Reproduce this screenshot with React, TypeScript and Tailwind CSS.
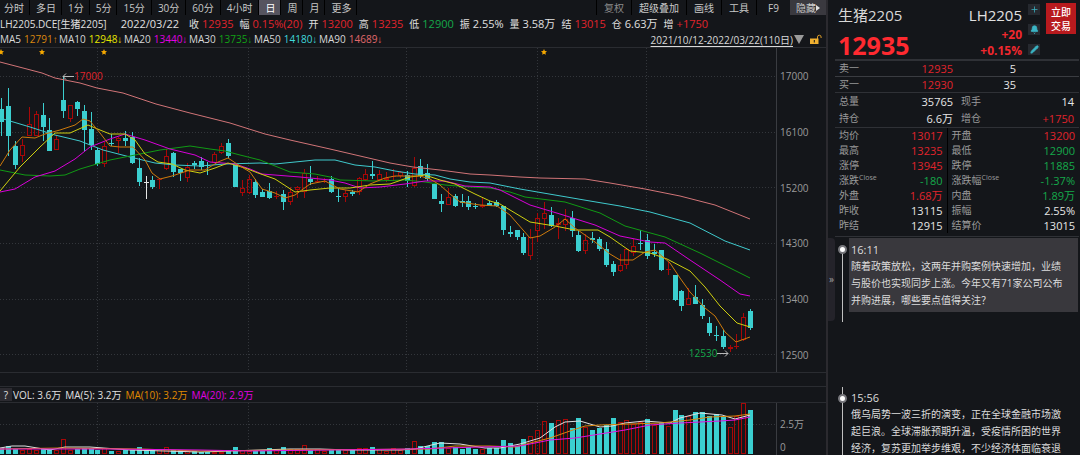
import { Bell, Pencil, Plus } from 'lucide-react';
import clsx from 'clsx';

type Candle = [kind: string, high: number, top: number, bottom: number, low: number, volume: number];

// kind: d = down, u = up, w = flat
const CANDLES: Candle[] = [
  ['d', 98, 109, 122, 136, 448], ['d', 88, 106, 136, 156, 446], ['d', 141, 146, 165, 169, 449], ['u', 139, 145, 156, 162, 450],
  ['u', 107, 124, 136, 136, 449], ['u', 111, 114, 136, 136, 450], ['d', 103, 115, 127, 141, 449], ['d', 118, 130, 151, 151, 449],
  ['u', 135, 139, 150, 150, 450], ['d', 76, 100, 111, 118, 439], ['u', 105, 105, 119, 122, 450], ['d', 101, 102, 109, 116, 449],
  ['d', 105, 111, 130, 151, 448], ['d', 112, 129, 145, 150, 448], ['d', 148, 150, 164, 166, 450], ['u', 142, 146, 164, 167, 448],
  ['d', 134, 143, 144, 146, 451], ['u', 137, 138, 141, 153, 451], ['d', 131, 138, 141, 146, 450], ['d', 132, 137, 163, 164, 450],
  ['d', 158, 168, 182, 186, 447], ['w', 176, 182, 183, 199, 450], ['d', 176, 180, 187, 189, 450], ['u', 178, 179, 180, 189, 449],
  ['u', 149, 156, 169, 170, 447], ['d', 152, 153, 172, 177, 450], ['d', 169, 169, 173, 181, 450], ['u', 163, 167, 178, 182, 451],
  ['d', 161, 163, 165, 169, 451], ['d', 157, 161, 167, 170, 452], ['d', 162, 165, 166, 175, 452], ['u', 152, 154, 163, 163, 452],
  ['u', 143, 146, 153, 154, 452], ['d', 139, 143, 156, 158, 451], ['d', 165, 165, 187, 187, 447], ['u', 180, 188, 193, 196, 450],
  ['u', 175, 179, 193, 194, 451], ['d', 179, 182, 195, 198, 450], ['d', 189, 192, 197, 197, 450], ['d', 183, 191, 198, 199, 448],
  ['u', 191, 196, 197, 199, 450], ['d', 190, 194, 202, 210, 447], ['u', 187, 192, 202, 205, 449], ['u', 186, 187, 190, 198, 449],
  ['u', 169, 173, 192, 198, 445], ['d', 166, 179, 182, 185, 450], ['u', 176, 181, 182, 183, 449], ['u', 178, 181, 182, 183, 451],
  ['d', 176, 179, 192, 193, 450], ['d', 188, 196, 197, 202, 450], ['u', 190, 193, 197, 202, 450], ['d', 190, 192, 194, 196, 450],
  ['u', 177, 178, 192, 195, 448], ['u', 169, 174, 180, 181, 448], ['d', 161, 174, 176, 179, 447], ['u', 170, 174, 180, 181, 449],
  ['u', 172, 178, 180, 182, 451], ['u', 169, 176, 177, 181, 448], ['u', 171, 172, 176, 178, 450], ['d', 171, 175, 181, 187, 448],
  ['u', 157, 168, 186, 187, 441], ['d', 159, 166, 176, 178, 446], ['d', 164, 173, 179, 181, 446], ['d', 184, 184, 199, 199, 442],
  ['d', 194, 201, 204, 212, 442], ['u', 188, 197, 205, 205, 448], ['d', 194, 196, 206, 207, 447], ['d', 194, 201, 203, 207, 449],
  ['d', 196, 201, 207, 210, 447], ['d', 203, 206, 207, 209, 449], ['u', 197, 205, 207, 208, 449], ['d', 201, 203, 206, 206, 448],
  ['d', 200, 202, 206, 207, 448], ['d', 206, 206, 230, 235, 440], ['d', 226, 232, 234, 237, 443], ['d', 230, 230, 237, 240, 446],
  ['d', 233, 237, 253, 255, 439], ['u', 229, 237, 256, 260, 436], ['u', 213, 218, 231, 242, 430], ['u', 202, 213, 219, 229, 421],
  ['d', 207, 215, 226, 227, 423], ['u', 218, 223, 225, 239, 420], ['u', 209, 219, 225, 231, 419], ['d', 211, 218, 231, 237, 428],
  ['d', 230, 235, 251, 252, 418], ['u', 234, 240, 251, 254, 427], ['d', 232, 238, 240, 243, 430], ['d', 237, 239, 249, 251, 428],
  ['d', 242, 249, 265, 267, 425], ['d', 261, 264, 272, 276, 418], ['u', 254, 265, 271, 272, 422], ['u', 248, 249, 265, 269, 420],
  ['u', 239, 246, 253, 256, 424], ['d', 230, 243, 244, 250, 422], ['d', 234, 240, 256, 259, 419], ['d', 244, 252, 254, 257, 425],
  ['d', 250, 250, 270, 271, 423], ['u', 262, 269, 270, 275, 426], ['d', 275, 275, 300, 301, 410], ['d', 290, 291, 306, 311, 415],
  ['u', 288, 298, 305, 305, 416], ['d', 285, 297, 304, 304, 412], ['d', 299, 305, 316, 319, 412], ['d', 317, 323, 333, 336, 416],
  ['d', 326, 335, 336, 341, 414], ['d', 330, 336, 347, 349, 416], ['u', 345, 347, 349, 352, 427], ['u', 334, 346, 347, 349, 416],
  ['u', 313, 317, 340, 341, 403], ['d', 309, 311, 328, 330, 410],
];

// volume bars drawn hollow although the candle closed down
const UP_VOLUME = [3, 9, 93, 95];

const PRICE_LINES = [
  { color: '#d17477', points: '0,62 23,68 42,73 55,78 80,83 97,88 123,93 156,104 190,113 230,123 265,134 290,140 330,149 360,156 390,163 413,167 440,170 470,174 490,175 520,177 540,178 585,179 610,183 645,189 680,196 715,205 750,219' },
  { color: '#3fc9cc', points: '0,118 30,127 55,135 80,141 103,150 130,157 155,163 175,165 200,166 225,164 260,163 275,164 295,162 315,160 335,160 355,165 375,167 395,171 415,174 435,175 450,179 470,182 490,183 520,189 555,195 590,201 620,206 650,212 690,223 725,241 750,250' },
  { color: '#109a14', points: '0,170 25,175 50,176 65,175 80,169 110,160 135,155 160,150 190,146 210,149 225,151 240,155 260,160 275,166 290,172 315,174 330,177 340,180 375,181 405,180 425,182 445,185 470,187 490,188 510,192 525,197 565,202 600,213 625,226 665,237 700,253 750,278' },
  { color: '#d800d8', points: '0,192 15,189 35,177 55,171 75,159 90,147 110,139 125,134 145,140 170,149 195,155 210,162 235,164 250,169 262,174 300,177 330,180 345,183 360,188 380,187 405,184 425,181 445,181 465,186 490,187 500,190 530,205 560,214 595,225 620,236 650,242 665,243 690,260 720,280 740,294 750,296' },
  { color: '#cfcf10', points: '0,191 20,167 40,147 55,133 70,133 88,125 100,130 110,134 125,134 135,140 145,154 158,162 172,164 185,170 200,173 215,168 228,163 245,168 258,173 275,179 295,192 310,190 330,188 350,188 370,185 390,184 410,177 425,175 440,180 455,184 475,194 490,201 500,204 530,222 555,226 575,230 598,230 610,237 630,251 650,253 667,259 690,271 705,287 720,306 737,323 750,327' },
  { color: '#cd7a0c', points: '0,166 10,150 22,137 35,138 45,134 60,130 75,125 83,119 90,121 100,133 110,146 120,147 133,147 145,160 152,173 160,179 172,176 190,170 205,170 218,162 228,158 240,166 250,172 262,189 275,193 285,198 295,195 310,184 325,181 340,189 358,192 370,184 385,178 395,176 420,176 430,179 440,185 450,194 460,202 480,205 497,206 510,215 530,238 540,236 555,227 565,219 575,228 595,242 610,254 620,260 633,260 645,252 655,250 670,263 680,278 690,292 705,308 715,316 725,332 736,342 750,337' },
];

const VOLUME_LINES = [
  { color: '#e0e0e0', points: '0,448 12,446 25,446 50,450 65,447 90,447 130,450 200,452 260,450 290,449 320,449 350,450 400,450 415,449 440,443 460,444 485,448 500,448 520,444 540,438 555,427 565,422 580,421 590,424 600,427 612,426 625,423 645,421 670,423 680,418 700,413 722,415 735,419 750,415' },
  { color: '#d9860f', points: '0,449 60,448 140,449 200,451 290,450 430,449 455,446 490,446 515,447 530,443 550,438 570,431 585,426 600,425 660,423 690,420 710,417 735,416 750,414' },
  { color: '#e012e0', points: '0,449 110,449 200,450 250,451 330,450 410,449 480,447 520,446 550,440 575,438 600,434 625,430 650,425 680,423 720,421 735,420 750,417' },
];

const GRID_X = [97, 248, 406, 537, 646];
const GRID_Y = [76, 132, 187, 243, 299, 354];
const STARS = [1, 42, 104, 544];

const PERIODS = ['分时', '多日', '1分', '5分', '15分', '30分', '60分', '4小时', '日', '周', '月', '更多'];
const TOOLS = ['复权', '超级叠加', '画线', '工具', 'F9'];

const SUMMARY = [
  ['收', '12935', 'text-[#e0242c]'],
  ['幅', '0.15%(20)', 'text-[#e0242c]'],
  ['开', '13200', 'text-[#e0242c]'],
  ['高', '13235', 'text-[#e0242c]'],
  ['低', '12900', 'text-[#14a84a]'],
  ['振', '2.55%', ''],
  ['量', '3.58万', ''],
  ['结', '13015', 'text-[#e0242c]'],
  ['仓', '6.63万', ''],
  ['增', '+1750', 'text-[#e0242c]'],
];

const AVERAGES = [
  ['MA5', '12791', '↑', 'text-[#d9860f]'],
  ['MA10', '12948', '↓', 'text-[#e6e600]'],
  ['MA20', '13440', '↓', 'text-[#e000e0]'],
  ['MA30', '13735', '↓', 'text-[#12a016]'],
  ['MA50', '14180', '↓', 'text-[#40d8dc]'],
  ['MA90', '14689', '↓', 'text-[#e0696c]'],
];

const RED = 'text-[#e0242c]';
const GREEN = 'text-[#14a84a]';
const WHITE = 'text-[#e6e6e6]';

const QUOTES = [
  ['均价', '', '13017', RED, '开盘', '', '13200', RED],
  ['最高', '', '13235', RED, '最低', '', '12900', GREEN],
  ['涨停', '', '13945', RED, '跌停', '', '11885', GREEN],
  ['涨跌', 'Close', '-180', GREEN, '涨跌幅', 'Close', '-1.37%', GREEN],
  ['外盘', '', '1.68万', RED, '内盘', '', '1.89万', GREEN],
  ['昨收', '', '13115', WHITE, '振幅', '', '2.55%', WHITE],
  ['昨结', '', '12915', WHITE, '结算价', '', '13015', WHITE],
];

const candleX = (i: number) => Math.round(1.3 + i * 6.87);

function Grid({ rows, top, bottom }: { rows: number[]; top: number; bottom: number }) {
  return (
    <g stroke="#33363b" strokeDasharray="1 2" shapeRendering="crispEdges">
      {GRID_X.map((x) => <line key={x} x1={x + 0.5} x2={x + 0.5} y1={top} y2={bottom} />)}
      {rows.map((y) => <line key={y} x1={0} x2={776} y1={y + 0.5} y2={y + 0.5} />)}
    </g>
  );
}

function PriceChart() {
  return (
    <svg viewBox="0 48 776 324" preserveAspectRatio="none" className="block h-full w-full">
      <Grid rows={GRID_Y} top={48} bottom={372} />
      {STARS.map((x) => (
        <path key={x} d={`M${x} 49l.9 2 2.1.2-1.6 1.5.5 2.1-1.9-1.1-1.9 1.1.5-2.1-1.6-1.5 2.1-.2z`} fill="#f5a800" />
      ))}
      <g shapeRendering="crispEdges">
        {CANDLES.map(([kind, high, top, bottom, low], i) => {
          const x = candleX(i);
          if (kind === 'u') {
            return (
              <g key={i} stroke="#a80808" fill="none">
                <path d={`M${x + 0.5} ${high}V${top}M${x + 0.5} ${bottom}V${low}`} />
                <rect x={x - 1.5} y={top + 0.5} width={4} height={Math.max(bottom - top - 1, 0.1)} />
              </g>
            );
          }
          return (
            <g key={i} fill={kind === 'w' ? '#e6e6e6' : '#3bcfd0'}>
              <rect x={x} y={high} width={1} height={low - high} />
              <rect x={x - 2} y={top} width={5} height={bottom - top} />
            </g>
          );
        })}
      </g>
      {PRICE_LINES.map((line) => (
        <polyline key={line.color} points={line.points} fill="none" stroke={line.color} />
      ))}
    </svg>
  );
}

function VolumeChart() {
  return (
    <svg viewBox="0 403 776 52" preserveAspectRatio="none" className="block h-full w-full">
      <Grid rows={[424]} top={403} bottom={455} />
      <g shapeRendering="crispEdges">
        {CANDLES.map(([kind, , , , , volume], i) => {
          const x = candleX(i);
          return kind === 'u' || UP_VOLUME.includes(i) ? (
            <rect key={i} x={x - 1.5} y={volume + 0.5} width={4} height={453 - volume} fill="none" stroke="#a80808" />
          ) : (
            <rect key={i} x={x - 2} y={volume} width={5} height={454 - volume} fill="#3bcfd0" />
          );
        })}
      </g>
      {VOLUME_LINES.map((line) => (
        <polyline key={line.color} points={line.points} fill="none" stroke={line.color} />
      ))}
    </svg>
  );
}

function Toolbar() {
  return (
    <nav className="flex h-4 shrink-0 text-[10px] leading-4 text-[#c8c8c8]">
      {PERIODS.map((period) => (
        <button
          key={period}
          className={clsx(
            'h-[15px] border-r border-black pl-[6px] first:pl-1',
            period.length > 2 ? 'pr-[6px]' : 'pr-[5px]',
            period === '日' && 'bg-[#56545f] text-white'
          )}
        >
          {period}
        </button>
      ))}
      <div className="ml-auto flex">
        {TOOLS.map((tool) => (
          <button
            key={tool}
            className={clsx('h-[15px] min-w-[34px] border-l border-black px-[7px]', tool === '复权' && 'text-[#8a8a8a]')}
          >
            {tool}
          </button>
        ))}
        <button className="flex h-[15px] w-9 items-center justify-center bg-[#3a393f]">
          隐藏
          <svg viewBox="0 0 4 6" className="h-[6px] w-1"><path d="M0 0l4 3-4 3z" fill="#e0e0e0" /></svg>
        </button>
      </div>
    </nav>
  );
}

function OpenLock() {
  return (
    <svg viewBox="0 0 12 11" className="mr-1 ml-[5px] h-[11px] w-3">
      <path d="M7.5 5V3a1.8 1.8 0 0 1 3.6 0v1" fill="none" stroke="#d89a28" />
      <path d="M0 4.5h8.5V10H0z" fill="#f0b030" />
      <path d="M3.8 6h1v2.5h-1z" fill="#14161a" />
    </svg>
  );
}

function ChartPanel() {
  return (
    <main className="flex min-w-0 flex-1 flex-col">
      <Toolbar />
      <div className="flex h-4 shrink-0 items-center gap-[6px] text-[11px] leading-4 whitespace-nowrap text-[#e0e0e0]">
        <h1 className="mr-2 text-[10px]">LH2205.DCE[生猪2205]</h1>
        <span className="mr-1">2022/03/22</span>
        {SUMMARY.map(([label, value, color]) => (
          <span key={label} className="flex gap-[3px]">
            <span className="text-[10px]">{label}</span>
            <span className={color}>{value}</span>
          </span>
        ))}
      </div>
      <div className="flex h-4 shrink-0 items-center border-b border-[#2a2c31] text-[10px] leading-4 whitespace-nowrap text-[#d8d8d8]">
        {AVERAGES.map(([label, value, arrow, color]) => (
          <span key={label} className="flex w-[65px] gap-[3px] first:w-[59px]">
            {label}
            <span className={color}>
              {value}
              <span className="font-['Liberation_Sans']">{arrow}</span>
            </span>
          </span>
        ))}
        <button className="ml-auto flex items-center">
          <span className="underline underline-offset-2">2021/10/12-2022/03/22(110日)</span>
          <svg viewBox="0 0 12 9" className="h-[9px] w-3"><path d="M1 0h10L6 9z" fill="#9a9a9a" /></svg>
        </button>
        <OpenLock />
      </div>

      <div className="flex min-h-0 flex-1">
        <div className="relative min-w-0 flex-1">
          <PriceChart />
          <span className="absolute top-[20px] left-[8%] flex items-center text-[10px] leading-4 text-[#e0242c]">
            <svg viewBox="0 0 12 7" className="h-[7px] w-3" fill="none" stroke="#b8b8b8"><path d="M12 3.5H1M4 .5l-3 3 3 3" /></svg>
            17000
          </span>
          <span className="absolute right-[6%] bottom-[11px] flex items-center text-[10px] leading-4 text-[#14a84a]">
            12530
            <svg viewBox="0 0 12 7" className="h-[7px] w-3" fill="none" stroke="#b8b8b8"><path d="M0 3.5h11M8 .5l3 3-3 3" /></svg>
          </span>
        </div>
        <div className="flex w-[50px] shrink-0 flex-col justify-between border-l border-[#3a3c41] pt-5 pb-[9px] pl-[3px] text-[10px] leading-4 text-[#9a9a9a]">
          {['17000', '16100', '15200', '14300', '13400', '12500'].map((price) => <span key={price}>{price}</span>)}
        </div>
      </div>

      <div className="h-[15px] shrink-0 border-y border-[#2a2c31]" />
      <div className="flex h-4 shrink-0 items-center gap-1 border-b border-[#2a2c31] text-[10px] leading-4 whitespace-nowrap text-[#e0e0e0]">
        <button className="-mr-[3px] h-[13px] w-3 bg-[#2c2b31] leading-3">?</button>
        <span>VOL: 3.6万</span>
        <span>MA(5): 3.2万</span>
        <span className="text-[#e08a00]">MA(10): 3.2万</span>
        <span className="text-[#e000e0]">MA(20): 2.9万</span>
      </div>
      <div className="flex h-[52px] shrink-0">
        <div className="min-w-0 flex-1">
          <VolumeChart />
        </div>
        <div className="flex w-[50px] shrink-0 flex-col justify-between border-l border-[#3a3c41] pt-[13px] pl-[3px] text-[10px] leading-4 text-[#9a9a9a]">
          <span>2.5万</span>
          <span>0</span>
        </div>
      </div>
    </main>
  );
}

function QuoteHeader() {
  return (
    <header className="flex h-[59px] justify-between pt-[3px] pr-[3px] pl-[3px]">
      <div className="flex flex-col">
        <h2 className="text-[15px] leading-6 text-[#d8d8d8]">生猪2205</h2>
        <strong className="pt-[2px] text-[25px] leading-8 text-[#ff2a30]">12935</strong>
      </div>
      <div className="flex gap-[6px]">
        <div className="flex flex-col text-right">
          <span className="text-[15px] leading-6 text-[#e0e0e0]">LH2205</span>
          <strong className="text-[12px] leading-4 text-[#f0282e]">+20</strong>
          <strong className="text-[12px] leading-4 text-[#f0282e]">+0.15%</strong>
        </div>
        <div className="flex flex-col gap-[9px] pt-px text-[#3bb4c4]">
          <button aria-label="添加" className="flex h-[11px] w-3 items-center justify-center bg-[#26292f]"><Plus size={9} /></button>
          <button aria-label="提醒" className="flex h-[11px] w-3 items-center justify-center bg-[#26292f]"><Bell size={9} fill="currentColor" /></button>
          <button aria-label="编辑" className="flex h-[11px] w-3 items-center justify-center bg-[#26292f]"><Pencil size={9} fill="currentColor" /></button>
        </div>
        <button className="h-[31px] w-[30px] bg-[#b81a1e] text-[10px] leading-[14px] font-medium text-white">
          立即
          <br />
          交易
        </button>
      </div>
    </header>
  );
}

function QuoteTables() {
  return (
    <div className="border-b border-[#2f3136] text-[11px] text-[#9a9a9a] [&_td]:p-0 [&_td]:text-right [&_th]:p-0 [&_th]:text-left [&_th]:text-[10px] [&_th]:font-normal">
      <table className="w-full table-fixed border-t-2 border-[#2f3136] leading-[15px]">
        <tbody>
          <tr className="border-b border-[#3a3c41]">
            <th className="w-10"><span className="pl-1">卖一</span></th>
            <td className={clsx('w-[78px]', RED)}>12935</td>
            <td className={clsx('w-[63px]', WHITE)}>5</td>
            <td />
          </tr>
          <tr className="border-b border-[#2f3136]">
            <th><span className="pl-1">买一</span></th>
            <td className={RED}>12930</td>
            <td className={WHITE}>35</td>
            <td />
          </tr>
        </tbody>
      </table>
      <table className="w-full table-fixed border-b border-[#2f3136] leading-[17px]">
        <tbody>
          <tr>
            <th className="w-10"><span className="pl-1">总量</span></th>
            <td className={clsx('w-[78px]', WHITE)}>35765</td>
            <th className="w-10"><span className="pl-2">现手</span></th>
            <td className={WHITE}><span className="pr-[5px]">14</span></td>
          </tr>
          <tr>
            <th><span className="pl-1">持仓</span></th>
            <td className={WHITE}>6.6万</td>
            <th><span className="pl-2">增仓</span></th>
            <td className={RED}><span className="pr-[5px]">+1750</span></td>
          </tr>
        </tbody>
      </table>
      <table className="mb-[3px] w-full table-fixed leading-[15px]">
        <tbody>
          {QUOTES.map(([label, note, value, color, label2, note2, value2, color2]) => (
            <tr key={label} className="h-[15px]">
              <th className="w-14">
                <span className="flex pl-1">{label}<span className="text-[7px] leading-[10px]">{note}</span></span>
              </th>
              <td className={clsx('w-14 border-r border-black', color)}><span className="pr-1">{value}</span></td>
              <th className="w-16">
                <span className="flex pl-1">{label2}<span className="text-[7px] leading-[10px]">{note2}</span></span>
              </th>
              <td className={color2}><span className="pr-1">{value2}</span></td>
            </tr>
          ))}
        </tbody>
      </table>
    </div>
  );
}

function Dot() {
  return <span className="absolute top-[7px] left-[3px] h-[9px] w-[9px] rounded-full border-2 border-[#77777c] bg-white" />;
}

function SidePanel() {
  return (
    <aside className="flex w-[254px] shrink-0 flex-col border-l-2 border-[#2b2a2f]">
      <div className="pr-px pl-[7px]">
        <QuoteHeader />
        <QuoteTables />
      </div>
      <div className="flex min-h-0 flex-1 overflow-hidden pt-px">
        <button aria-label="收起" className="h-[83px] w-[7px] shrink-0 rounded-r-sm bg-[#24232a] text-[10px] text-[#a0a0a0]">»</button>
        <ol className="min-w-0 flex-1 text-[10px] leading-[17px] text-[#dcdcdc]">
          <li className="relative mb-[65px] pr-[2px] pb-[10px] pl-[14px]">
            <span className="absolute top-[11px] bottom-0 left-[7px] w-px bg-[#c0c0c0]" />
            <Dot />
            <article className="bg-[#39383d] pt-[3px] pr-[13px] pb-[3px] pl-[2px]">
              <time className="block text-[11px]">16:11</time>
              <p>随着政策放松，这两年并购案例快速增加，业绩与股价也实现同步上涨。今年又有71家公司公布并购进展，哪些要点值得关注？</p>
            </article>
          </li>
          <li className="relative pr-[2px] pl-[14px]">
            <span className="absolute top-0 bottom-0 left-[7px] w-px bg-[#c0c0c0]" />
            <Dot />
            <article className="pt-[3px] pr-[13px] pl-[2px]">
              <time className="block text-[11px] leading-4">15:56</time>
              <p>俄乌局势一波三折的演变，正在全球金融市场激起巨浪。全球滞胀预期升温，受疫情所困的世界经济，复苏更加举步维艰，不少经济体面临衰退</p>
            </article>
          </li>
        </ol>
      </div>
    </aside>
  );
}

export default function App() {
  return (
    <div
      lang="zh-CN"
      className="flex h-screen overflow-hidden bg-[#14161a] font-['Open_Sans','Noto_Sans_CJK_SC',sans-serif]"
    >
      <ChartPanel />
      <SidePanel />
    </div>
  );
}
